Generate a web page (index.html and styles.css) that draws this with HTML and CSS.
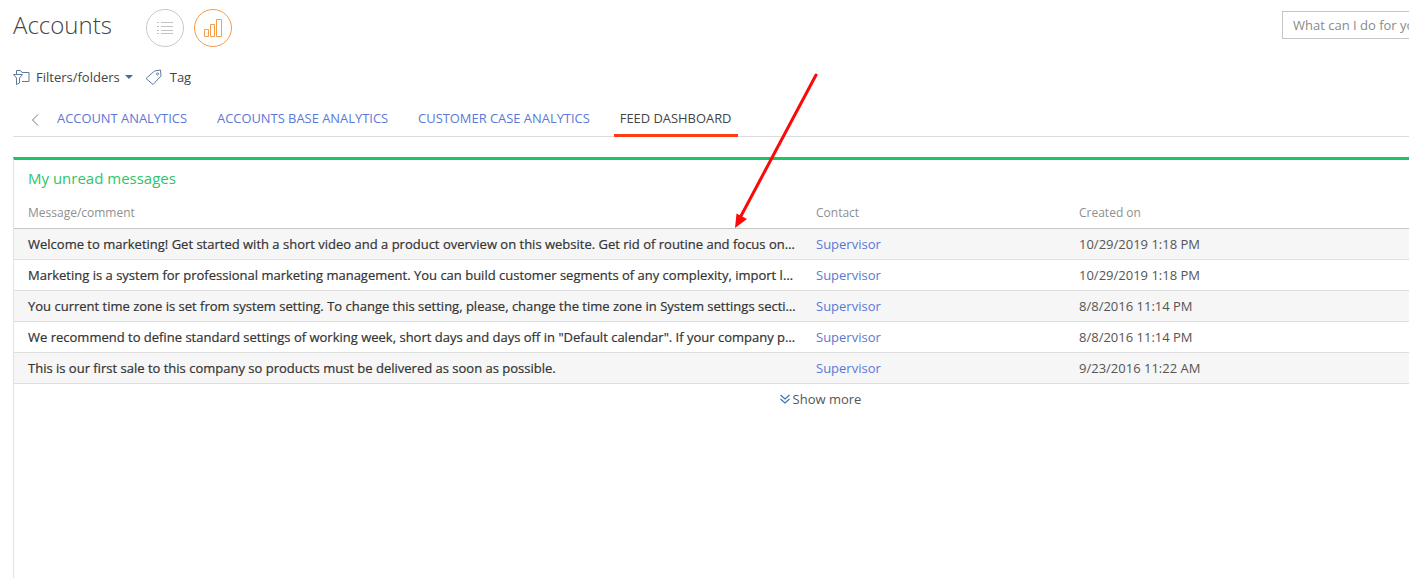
FILE: index.html
```html
<!DOCTYPE html>
<html lang="en">
<head>
<meta charset="utf-8">
<title>Accounts</title>
<link rel="stylesheet" href="styles.css">
</head>
<body>
<div class="page">
  <header class="top">
    <h1 class="title">Accounts</h1>
    <div class="views">
      <button class="circle" aria-label="List">
        <svg width="16" height="14" viewBox="0 0 16 14" fill="none" stroke="#c2c2c2" stroke-width="1"><path d="M0 1.500h2M4 1.500h12M0 5.500h2M4 5.500h12M0 9.500h2M4 9.500h12M0 12.500h2M4 12.500h12"/></svg>
      </button>
      <button class="circle active" aria-label="Analytics">
        <svg width="18" height="18" viewBox="0 0 18 18" fill="none" stroke="#f59b4c" stroke-width="1"><path d="M.5 10.500h4v7h-4zM6.500 5.500h4v12h-4zM12.500 .5h5v17h-5z"/></svg>
      </button>
    </div>
    <div class="search">What can I do for you?</div>
  </header>
  <div class="filters">
    <span class="filter">
      <svg width="17" height="16" viewBox="0 0 17 16" fill="none" stroke="#5f7a9c" stroke-width="1"><path d="M3.500 5V1.500h4l1.500 2h7v9h-7M.5 5.500h9l-3 3.500v5l-3 1.500V9z"/></svg>
      Filters/folders
      <i class="caret"></i>
    </span>
    <span class="filter tag">
      <svg width="18" height="18" viewBox="0 0 18 18" fill="none" stroke="#5f7a9c" stroke-width="1"><path d="M1 10.500 9.500 3l6-1 .5 6-8 8.500zM12.500 5a1 1 0 1 0 .01 0"/></svg>
      Tag
    </span>
  </div>
  <nav class="tabs">
    <svg class="back" width="8" height="12" viewBox="0 0 8 12" fill="none" stroke="#777" stroke-width="1"><path d="M7 .5 1.500 6 7 11.500"/></svg>
    <a class="tab">ACCOUNT ANALYTICS</a>
    <a class="tab">ACCOUNTS BASE ANALYTICS</a>
    <a class="tab">CUSTOMER CASE ANALYTICS</a>
    <a class="tab current">FEED DASHBOARD</a>
  </nav>
  <section class="panel">
    <h2 class="panel-title">My unread messages</h2>
    <div class="row head">
      <div class="c-msg">Message/comment</div>
      <div class="c-contact">Contact</div>
      <div class="c-date">Created on</div>
    </div>
    <div class="row odd">
      <div class="c-msg">Welcome to marketing! Get started with a short video and a product overview on this website. Get rid of routine and focus on…</div>
      <div class="c-contact"><a>Supervisor</a></div>
      <div class="c-date">10/29/2019 1:18 PM</div>
    </div>
    <div class="row">
      <div class="c-msg">Marketing is a system for professional marketing management. You can build customer segments of any complexity, import l…</div>
      <div class="c-contact"><a>Supervisor</a></div>
      <div class="c-date">10/29/2019 1:18 PM</div>
    </div>
    <div class="row odd">
      <div class="c-msg">You current time zone is set from system setting. To change this setting, please, change the time zone in System settings secti…</div>
      <div class="c-contact"><a>Supervisor</a></div>
      <div class="c-date">8/8/2016 11:14 PM</div>
    </div>
    <div class="row">
      <div class="c-msg">We recommend to define standard settings of working week, short days and days off in "Default calendar". If your company p…</div>
      <div class="c-contact"><a>Supervisor</a></div>
      <div class="c-date">8/8/2016 11:14 PM</div>
    </div>
    <div class="row odd">
      <div class="c-msg">This is our first sale to this company so products must be delivered as soon as possible.</div>
      <div class="c-contact"><a>Supervisor</a></div>
      <div class="c-date">9/23/2016 11:22 AM</div>
    </div>
    <div class="more">
      <svg width="10" height="10" viewBox="0 0 10 10" fill="none" stroke="#3f76b5" stroke-width="1.300"><path d="M.5 1 5 5 9.500 1M.5 5 5 9 9.500 5"/></svg>
      Show more
    </div>
  </section>
  <svg class="arrow" width="100" height="170" viewBox="0 0 100 170" fill="none">
    <path d="M90 4 15 145" stroke="#fb0a0a" stroke-width="3" stroke-linecap="round"/>
    <path d="M9 157 10.500 142.500 21 148z" fill="#fb0a0a"/>
  </svg>
</div>
</body>
</html>
```
FILE: styles.css
```css
* { box-sizing: border-box; }
html, body { margin: 0; padding: 0; background: #fff; }
body { font-family: "Open Sans", "Liberation Sans", sans-serif; color: #444; }
.page { position: relative; width: 1409px; height: 578px; overflow: hidden; }

.top { display: flex; align-items: center; height: 56px; padding: 0 0 4px 13px; }
.title { flex: none; margin: -2px 0 0; width: 133px; font-size: 24px; font-weight: 300; line-height: 32px; color: #444; }
.views { flex: none; display: flex; gap: 10px; margin-top: 4px; }
.circle { display: flex; align-items: center; justify-content: center; width: 38px; height: 38px; padding: 0; border: 1px solid #c9c9c9; border-radius: 50%; background: #fff; }
.circle.active { border-color: #f59b4c; }
.search { flex: none; margin: -2px 0 0 1050px; width: 180px; height: 28px; padding-left: 10px; border: 1px solid #c6c6c6; font-size: 13px; line-height: 26px; color: #8a8a8a; white-space: nowrap; overflow: hidden; }

.filters { display: flex; align-items: center; height: 24px; margin-top: 9px; padding-left: 13px; font-size: 13px; color: #444; }
.filter { display: flex; align-items: center; gap: 6px; }
.tag { margin-left: 12px; gap: 7px; }
.caret { width: 0; height: 0; margin-left: -1px; border-left: 4.500px solid transparent; border-right: 4.500px solid transparent; border-top: 4.500px solid #4c6a94; }

.tabs { display: flex; align-items: stretch; height: 34px; margin: 14px 0 0 13px; border-bottom: 1px solid #dcdcdc; }
.back { align-self: center; margin: 0 12px 0 18px; flex: none; }
.tab { display: flex; align-items: center; height: 34px; padding: 0 6px 2px; margin-right: 18px; font-size: 12.920px; color: #5a78d6; white-space: nowrap; border-bottom: 3px solid transparent; }
.tab.current { color: #444; border-bottom-color: #ff3d14; }

.panel { height: 421px; margin: 20px 0 0 13px; border-top: 3px solid #1ec460; border-left: 1px solid #e2e2e2; }
.panel-title { margin: 0; padding: 6px 0 0 14px; height: 37px; font-size: 15px; font-weight: 400; line-height: 24px; color: #2ec56a; }
.row { display: flex; align-items: center; height: 31px; padding-left: 14px; border-bottom: 1px solid #dedede; font-size: 13px; }
.row.head { height: 32px; font-size: 12px; color: #8f8f8f; border-bottom: 1px solid #c6c6c6; }
.row.odd { background: #f6f6f6; }
.c-msg { flex: none; width: 788px; white-space: nowrap; }
.row:not(.head) .c-msg { color: #333; -webkit-text-stroke: 0.2px #333; }
.c-contact { flex: none; width: 263px; }
.c-contact a { color: #5a78d6; }
.row:not(.head) .c-date { color: #555; }
.more { display: flex; align-items: center; justify-content: center; gap: 3px; height: 30px; padding-left: 218px; font-size: 13px; color: #555; }

.arrow { position: absolute; left: 726px; top: 71px; }
```
